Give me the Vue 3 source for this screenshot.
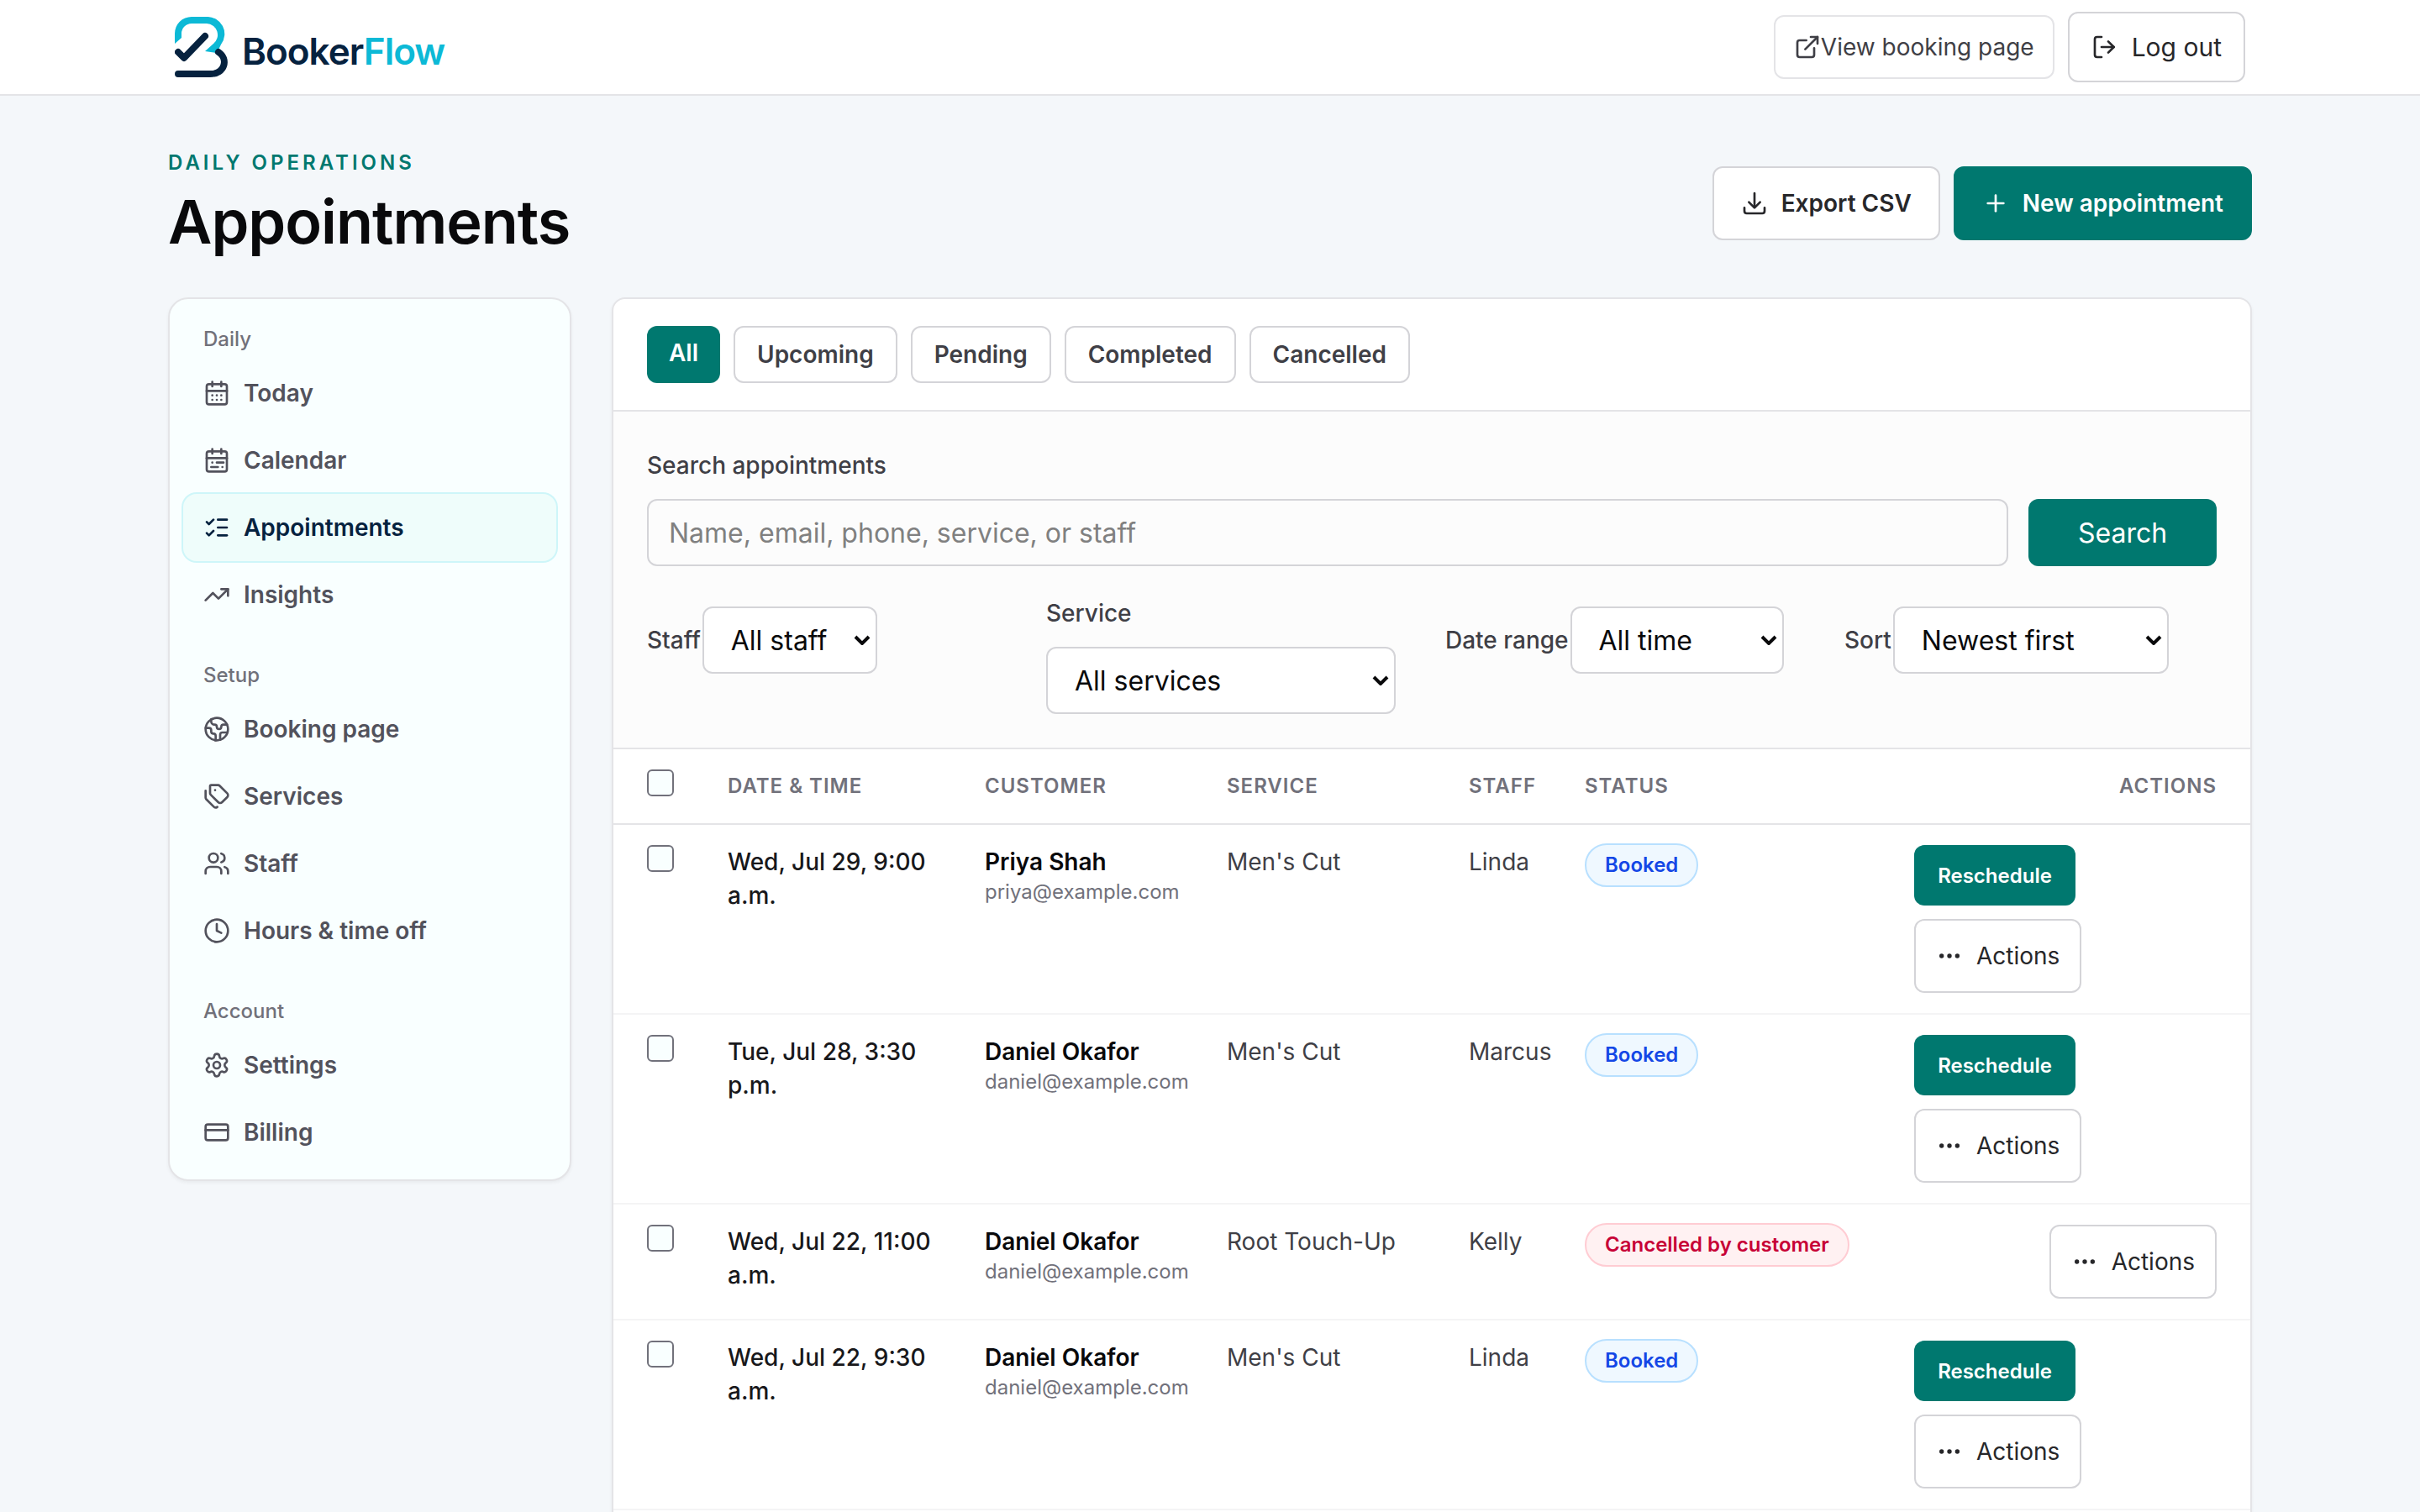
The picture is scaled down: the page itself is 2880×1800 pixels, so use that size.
<script setup>
import { ref } from 'vue';

const icons = {
  external: ['M15 3h6v6', 'M10 14 21 3', 'M18 13v6a2 2 0 0 1-2 2H5a2 2 0 0 1-2-2V8a2 2 0 0 1 2-2h6'],
  logout: ['M9 21H5a2 2 0 0 1-2-2V5a2 2 0 0 1 2-2h4', 'M15 17l5-5-5-5', 'M20 12H9'],
  download: ['M12 3v12', 'M7 11l5 5 5-5', 'M3 16v3a2 2 0 0 0 2 2h14a2 2 0 0 0 2-2v-3'],
  plus: ['M5 12h14', 'M12 5v14'],
  today: ['M8 2v4', 'M16 2v4', 'M5 4h14a2 2 0 0 1 2 2v14a2 2 0 0 1-2 2H5a2 2 0 0 1-2-2V6a2 2 0 0 1 2-2z', 'M3 10h18', 'M8 14h.01', 'M12 14h.01', 'M16 14h.01', 'M8 18h.01', 'M12 18h.01', 'M16 18h.01'],
  calendar: ['M8 2v4', 'M16 2v4', 'M5 4h14a2 2 0 0 1 2 2v14a2 2 0 0 1-2 2H5a2 2 0 0 1-2-2V6a2 2 0 0 1 2-2z', 'M3 10h18', 'M8 14h.01', 'M12 14h6', 'M7 18h6', 'M17 18h.01'],
  checks: ['M13 5h8', 'M13 12h8', 'M13 19h8', 'm3 17 2 2 4-4', 'm3 7 2 2 4-4'],
  insights: ['M16 7h6v6', 'm22 7-8.500 8.500-5-5L2 17'],
  globe: ['M21.540 15H17a2 2 0 0 0-2 2v4.540', 'M7 3.340V5a3 3 0 0 0 3 3a2 2 0 0 1 2 2c0 1.100.9 2 2 2a2 2 0 0 0 2-2c0-1.100.9-2 2-2h3.170', 'M11 21.950V18a2 2 0 0 0-2-2a2 2 0 0 1-2-2v-1a2 2 0 0 0-2-2H2.050', 'M12 2a10 10 0 1 0 0 20a10 10 0 1 0 0-20z'],
  tags: ['M13.172 2a2 2 0 0 1 1.414.586l6.710 6.710a2.400 2.400 0 0 1 0 3.408l-4.592 4.592a2.400 2.400 0 0 1-3.408 0l-6.710-6.710A2 2 0 0 1 6 9.172V3a1 1 0 0 1 1-1z', 'M2 7v6.172a2 2 0 0 0 .586 1.414l6.710 6.710a2.400 2.400 0 0 0 3.191.193', 'M10.500 6.500h.01'],
  users: ['M16 21v-2a4 4 0 0 0-4-4H6a4 4 0 0 0-4 4v2', 'M16 3.128a4 4 0 0 1 0 7.744', 'M22 21v-2a4 4 0 0 0-3-3.870', 'M9 3a4 4 0 1 0 0 8a4 4 0 1 0 0-8z'],
  clock: ['M12 2a10 10 0 1 0 0 20a10 10 0 1 0 0-20z', 'M12 6v6l4 2'],
  settings: ['M9.671 4.136a2.340 2.340 0 0 1 4.659 0 2.340 2.340 0 0 0 3.319 1.915 2.340 2.340 0 0 1 2.330 4.033 2.340 2.340 0 0 0 0 3.831 2.340 2.340 0 0 1-2.330 4.033 2.340 2.340 0 0 0-3.319 1.915 2.340 2.340 0 0 1-4.659 0 2.340 2.340 0 0 0-3.320-1.915 2.340 2.340 0 0 1-2.330-4.033 2.340 2.340 0 0 0 0-3.831A2.340 2.340 0 0 1 6.350 6.051a2.340 2.340 0 0 0 3.319-1.915', 'M12 9a3 3 0 1 0 0 6a3 3 0 1 0 0-6z'],
  card: ['M4 5h16a2 2 0 0 1 2 2v10a2 2 0 0 1-2 2H4a2 2 0 0 1-2-2V7a2 2 0 0 1 2-2z', 'M2 10h20'],
  dots: ['M5 12h.01', 'M12 12h.01', 'M19 12h.01']
};

const menu = [
  {
    title: 'Daily',
    items: [
      { label: 'Today', icon: 'today' },
      { label: 'Calendar', icon: 'calendar' },
      { label: 'Appointments', icon: 'checks', active: true },
      { label: 'Insights', icon: 'insights' }
    ]
  },
  {
    title: 'Setup',
    items: [
      { label: 'Booking page', icon: 'globe' },
      { label: 'Services', icon: 'tags' },
      { label: 'Staff', icon: 'users' },
      { label: 'Hours & time off', icon: 'clock' }
    ]
  },
  {
    title: 'Account',
    items: [
      { label: 'Settings', icon: 'settings' },
      { label: 'Billing', icon: 'card' }
    ]
  }
];

const tabs = ['All', 'Upcoming', 'Pending', 'Completed', 'Cancelled'];
const activeTab = ref('All');

const search = ref('');
const selected = ref([]);

const appointments = [
  { id: 1, date: 'Wed, Jul 29, 9:00 a.m.', name: 'Priya Shah', email: 'priya@example.com', service: "Men's Cut", staff: 'Linda', status: 'Booked' },
  { id: 2, date: 'Tue, Jul 28, 3:30 p.m.', name: 'Daniel Okafor', email: 'daniel@example.com', service: "Men's Cut", staff: 'Marcus', status: 'Booked' },
  { id: 3, date: 'Wed, Jul 22, 11:00 a.m.', name: 'Daniel Okafor', email: 'daniel@example.com', service: 'Root Touch-Up', staff: 'Kelly', status: 'Cancelled by customer' },
  { id: 4, date: 'Wed, Jul 22, 9:30 a.m.', name: 'Daniel Okafor', email: 'daniel@example.com', service: "Men's Cut", staff: 'Linda', status: 'Booked' }
];

function toggleAll(event) {
  selected.value = event.target.checked ? appointments.map((a) => a.id) : [];
}
</script>

<template>
  <div class="page">
    <header class="topbar">
      <div class="topbar-inner">
        <a href="#" class="logo">
          <svg class="logo-mark" viewBox="0 0 64 72" fill="none" stroke-linecap="round" stroke-linejoin="round">
            <path d="M0 32V20A20 20 0 0 1 20 0H38A20.500 20.500 0 0 1 55 33L50 43L36 41L46 32A13.500 13.500 0 0 0 38 8H20A12 12 0 0 0 8 20V25Z" fill="#0cb9d6" />
            <path d="M52 42C64 50 60 68 42 68H4" stroke="#06223f" stroke-width="8" />
            <path d="M4 42l7 7 25-26" stroke="#06223f" stroke-width="8" />
          </svg>
          <span class="logo-text">Booker<span class="logo-accent">Flow</span></span>
        </a>
        <div class="topbar-actions">
          <a href="#" class="link-btn">
            <svg class="icon" viewBox="0 0 24 24"><path v-for="d in icons.external" :key="d" :d="d" /></svg>
            View booking page
          </a>
          <button type="button" class="btn logout-btn">
            <svg class="icon" viewBox="0 0 24 24"><path v-for="d in icons.logout" :key="d" :d="d" /></svg>
            Log out
          </button>
        </div>
      </div>
    </header>

    <main class="content">
      <div class="page-head">
        <div>
          <p class="eyebrow">Daily operations</p>
          <h1>Appointments</h1>
        </div>
        <div class="head-actions">
          <button type="button" class="btn strong">
            <svg class="icon" viewBox="0 0 24 24"><path v-for="d in icons.download" :key="d" :d="d" /></svg>
            Export CSV
          </button>
          <button type="button" class="btn strong primary">
            <svg class="icon" viewBox="0 0 24 24"><path v-for="d in icons.plus" :key="d" :d="d" /></svg>
            New appointment
          </button>
        </div>
      </div>

      <div class="layout">
        <nav class="sidebar">
          <div v-for="group in menu" :key="group.title" class="menu-group">
            <p class="menu-title">{{ group.title }}</p>
            <a v-for="item in group.items" :key="item.label" href="#" class="menu-item" :class="{ active: item.active }">
              <svg class="icon" viewBox="0 0 24 24"><path v-for="d in icons[item.icon]" :key="d" :d="d" /></svg>
              {{ item.label }}
            </a>
          </div>
        </nav>

        <section class="panel">
          <div class="tabs">
            <button v-for="tab in tabs" :key="tab" type="button" class="tab" :class="{ current: tab === activeTab }" @click="activeTab = tab">{{ tab }}</button>
          </div>

          <form class="filters" @submit.prevent>
            <label for="search" class="field-label">Search appointments</label>
            <div class="search-row">
              <input id="search" v-model="search" type="text" class="control" placeholder="Name, email, phone, service, or staff" />
              <button type="submit" class="search-btn">Search</button>
            </div>
            <div class="filter-grid">
              <div class="inline-field">
                <label for="staff">Staff</label>
                <select id="staff" class="control select-staff"><option>All staff</option></select>
              </div>
              <div>
                <label for="service" class="field-label">Service</label>
                <select id="service" class="control select-service"><option>All services</option></select>
              </div>
              <div class="inline-field">
                <label for="range">Date range</label>
                <select id="range" class="control select-range"><option>All time</option></select>
              </div>
              <div class="inline-field">
                <label for="sort">Sort</label>
                <select id="sort" class="control select-sort"><option>Newest first</option></select>
              </div>
            </div>
          </form>

          <table>
            <colgroup>
              <col class="col-check" />
              <col class="col-date" />
              <col class="col-customer" />
              <col class="col-service" />
              <col class="col-staff" />
              <col class="col-status" />
              <col class="col-actions" />
            </colgroup>
            <thead>
              <tr>
                <th class="check-cell"><input type="checkbox" aria-label="Select all" @change="toggleAll" /></th>
                <th>Date &amp; time</th>
                <th>Customer</th>
                <th>Service</th>
                <th>Staff</th>
                <th>Status</th>
                <th class="actions-cell">Actions</th>
              </tr>
            </thead>
            <tbody>
              <tr v-for="a in appointments" :key="a.id">
                <td class="check-cell"><input v-model="selected" type="checkbox" :value="a.id" :aria-label="a.name" /></td>
                <td class="date">{{ a.date }}</td>
                <td>
                  <div class="name">{{ a.name }}</div>
                  <div class="email">{{ a.email }}</div>
                </td>
                <td>{{ a.service }}</td>
                <td>{{ a.staff }}</td>
                <td class="status-cell">
                  <span class="badge" :class="a.status === 'Booked' ? 'booked' : 'cancelled'">{{ a.status }}</span>
                </td>
                <td class="actions-cell">
                  <div class="row-actions">
                    <button v-if="a.status === 'Booked'" type="button" class="reschedule">Reschedule</button>
                    <button type="button" class="btn more">
                      <svg class="icon" viewBox="0 0 24 24"><path v-for="d in icons.dots" :key="d" :d="d" /></svg>
                      Actions
                    </button>
                  </div>
                </td>
              </tr>
            </tbody>
          </table>
        </section>
      </div>
    </main>
  </div>
</template>

<style>
body {
  margin: 0;
  background-color: #f4f7fa;
}
</style>

<style scoped>
.page {
  height: 100vh;
  overflow: hidden;
  font-family: Inter, "Liberation Sans", sans-serif;
  font-size: 28px;
  line-height: 40px;
  color: #3f3f46;
}
.page *, .page *::before {
  box-sizing: border-box;
}
button, input, select {
  font-family: inherit;
  margin: 0;
}
a {
  color: inherit;
  text-decoration: none;
}
p, h1 {
  margin: 0;
}
.icon {
  width: 32px;
  height: 32px;
  flex: none;
  fill: none;
  stroke: currentColor;
  stroke-width: 2;
  stroke-linecap: round;
  stroke-linejoin: round;
}

.topbar {
  background-color: #fff;
  border-bottom: 2px solid #e4e4e7;
}
.topbar-inner {
  display: flex;
  align-items: center;
  justify-content: space-between;
  max-width: 2560px;
  height: 112px;
  margin: 0 auto;
  padding: 0 48px;
}
.logo {
  display: flex;
  align-items: center;
  gap: 16px;
}
.logo-mark {
  width: 64px;
  height: 72px;
}
.logo-text {
  padding-top: 10px;
  font-size: 44px;
  font-weight: 600;
  letter-spacing: -1px;
  color: #06223f;
}
.logo-accent {
  color: #0cb9d6;
}
.topbar-actions, .head-actions {
  display: flex;
  align-items: center;
  gap: 16px;
}
.link-btn {
  display: flex;
  align-items: center;
  height: 76px;
  padding: 0 22px;
  border: 2px solid #e4e4e7;
  border-radius: 12px;
}
.btn {
  display: flex;
  align-items: center;
  gap: 16px;
  height: 88px;
  padding: 0 32px;
  border: 2px solid #d4d4d8;
  border-radius: 12px;
  background-color: #fff;
  color: #27272a;
  font-size: 28px;
}
.btn.strong {
  font-weight: 600;
}
.btn.primary {
  background-color: #00786f;
  border-color: #00786f;
  color: #fff;
}
.btn.logout-btn {
  height: 84px;
  padding: 0 26px;
  font-size: 30px;
}

.content {
  max-width: 2560px;
  margin: 0 auto;
  padding: 64px 40px;
}
.page-head {
  display: flex;
  align-items: center;
  justify-content: space-between;
  margin-bottom: 48px;
}
.eyebrow {
  font-size: 24px;
  line-height: 32px;
  font-weight: 600;
  letter-spacing: 4px;
  text-transform: uppercase;
  color: #00786f;
}
h1 {
  margin-top: 12px;
  font-size: 72px;
  line-height: 84px;
  font-weight: 600;
  letter-spacing: -1px;
  color: #09090b;
}

.layout {
  display: grid;
  grid-template-columns: 480px minmax(0, 1fr);
  align-items: start;
  gap: 48px;
}
.sidebar {
  padding: 16px;
  border: 2px solid #e4e4e7;
  border-radius: 24px;
  background-color: #f9ffff;
  box-shadow: 0 2px 4px rgba(0, 0, 0, 0.05);
}
.menu-group + .menu-group {
  margin-top: 24px;
}
.menu-title {
  padding: 16px 24px 8px;
  font-size: 24px;
  line-height: 32px;
  font-weight: 500;
  color: #71717a;
}
.menu-item {
  display: flex;
  align-items: center;
  gap: 16px;
  height: 80px;
  padding: 0 24px;
  border-radius: 16px;
  font-weight: 600;
  color: #52525c;
}
.menu-item.active {
  background-color: #effdfb;
  box-shadow: 0 0 0 2px #cef6f9;
  color: #06223f;
}

.panel {
  overflow: hidden;
  padding-bottom: 48px;
  border: 2px solid #e4e4e7;
  border-radius: 16px;
  background-color: #fff;
  box-shadow: 0 2px 4px rgba(0, 0, 0, 0.05);
}
.tabs {
  display: flex;
  gap: 16px;
  padding: 32px 40px;
  border-bottom: 2px solid #e4e4e7;
}
.tab {
  height: 68px;
  padding: 0 26px;
  border: 2px solid #d4d4d8;
  border-radius: 12px;
  background-color: #fff;
  color: #3f3f46;
  font-size: 28px;
  font-weight: 600;
}
.tab.current {
  padding-bottom: 4px;
  border-width: 0;
  background-color: #00786f;
  color: #fff;
}
.filters {
  padding: 40px;
  border-bottom: 2px solid #e4e4e7;
  background-color: #fcfcfc;
}
.filters label {
  font-weight: 500;
}
.field-label {
  display: block;
  margin-bottom: 16px;
  line-height: 48px;
}
.search-row {
  display: flex;
  gap: 24px;
}
.control {
  height: 80px;
  padding: 0 24px;
  border: 2px solid #d4d4d8;
  border-radius: 12px;
  background-color: transparent;
  color: #09090b;
  font-size: 32px;
}
input.control {
  flex: 1;
}
.control::placeholder {
  color: #808080;
  opacity: 1;
}
select.control {
  padding: 0 32px;
  appearance: none;
  background: #fff url("data:image/svg+xml,%3Csvg xmlns='http://www.w3.org/2000/svg' viewBox='0 0 20 12' fill='none' stroke='%2309090b' stroke-width='4'%3E%3Cpath d='M2 2l8 8 8-8'/%3E%3C/svg%3E") no-repeat right 6px center / 20px 12px;
}
.select-staff {
  width: 208px;
}
.select-service {
  width: 416px;
}
.select-range {
  width: 254px;
}
.select-sort {
  width: 328px;
}
.search-btn {
  width: 224px;
  border: 0;
  border-radius: 12px;
  background-color: #00786f;
  color: #fff;
  font-size: 32px;
}
.filter-grid {
  display: grid;
  grid-template-columns: repeat(4, minmax(0, 1fr));
  gap: 32px;
  margin-top: 32px;
}
.inline-field {
  display: flex;
  align-items: center;
  gap: 2px;
  height: 80px;
  margin-top: 16px;
  white-space: nowrap;
}

table {
  width: 100%;
  table-layout: fixed;
  border-collapse: separate;
  border-spacing: 0;
}
.col-check {
  width: 112px;
}
.col-date {
  width: 306px;
}
.col-customer, .col-service {
  width: 288px;
}
.col-staff {
  width: 138px;
}
.col-status {
  width: 392px;
}
.col-actions {
  width: 424px;
}
th {
  height: 90px;
  padding: 0 0 0 24px;
  border-bottom: 2px solid #e4e4e7;
  font-size: 24px;
  font-weight: 600;
  letter-spacing: 1px;
  text-align: left;
  text-transform: uppercase;
  color: #71717b;
}
td {
  padding: 24px 0 24px 24px;
  border-bottom: 2px solid #f4f4f5;
  vertical-align: top;
}
tr .check-cell {
  padding-left: 40px;
  vertical-align: top;
}
th.check-cell {
  padding-top: 24px;
}
tr .actions-cell {
  padding-right: 40px;
  text-align: right;
}
input[type="checkbox"] {
  display: block;
  width: 32px;
  height: 32px;
  border: 2px solid #71717b;
  border-radius: 6px;
  background-color: #f9ffff;
  appearance: none;
}
input[type="checkbox"]:checked {
  background-color: #00786f;
}
.date {
  padding-right: 16px;
  font-weight: 500;
  color: #18181b;
}
.name {
  font-weight: 600;
  color: #09090b;
}
.email {
  font-size: 24px;
  line-height: 32px;
  color: #71717b;
}
td.status-cell {
  padding-top: 22px;
}
.badge {
  display: inline-block;
  padding: 8px 22px;
  border: 2px solid;
  border-radius: 26px;
  font-size: 24px;
  line-height: 32px;
  font-weight: 600;
  white-space: nowrap;
}
.badge.booked {
  border-color: #b8e0ff;
  background-color: #eff8ff;
  color: #1447e6;
}
.badge.cancelled {
  border-color: #ffccd3;
  background-color: #fff1f2;
  color: #c70036;
}
.row-actions {
  display: inline-flex;
  flex-wrap: wrap;
  gap: 16px;
  vertical-align: top;
}
.reschedule {
  min-width: 192px;
  height: 72px;
  padding: 0 24px;
  border: 0;
  border-radius: 12px;
  background-color: #00786f;
  color: #fff;
  font-size: 24px;
  font-weight: 600;
}
.btn.more {
  padding: 0 24px;
}
.btn.more .icon {
  stroke-width: 4;
}
</style>
